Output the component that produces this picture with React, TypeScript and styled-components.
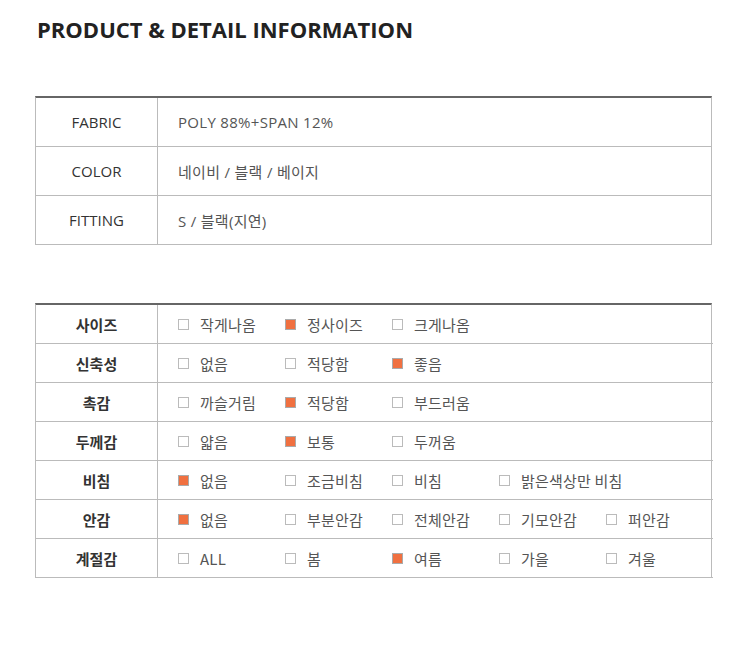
import React from "react";
import styled, { createGlobalStyle } from "styled-components";

const Global = createGlobalStyle`
  html, body { margin: 0; padding: 0; background: #fff; }
  body { font-family: "Open Sans", "Noto Sans CJK KR", sans-serif; }
`;

const Page = styled.div`
  width: 750px;
  padding: 14px 38px 0 35px;
  box-sizing: border-box;
`;

const Title = styled.h1`
  margin: 0 0 0 2px;
  font-family: "Open Sans", sans-serif;
  font-weight: 700;
  font-size: 22px;
  line-height: 30px;
  color: #222;
  letter-spacing: 0;
`;

const Table = styled.div<{ $top: number; $rowH: number }>`
  margin-top: ${(p) => p.$top}px;
  display: grid;
  grid-template-columns: 122px 1fr;
  grid-auto-rows: ${(p) => p.$rowH}px;
  border-top: 2px solid #666;
  border-left: 1px solid #bbb;
  border-right: 1px solid #bbb;
`;

const Label = styled.div<{ $bold?: boolean }>`
  display: flex;
  align-items: center;
  justify-content: center;
  border-right: 1px solid #bbb;
  border-bottom: 1px solid #bbb;
  font-family: "Open Sans", "Noto Sans CJK KR", sans-serif;
  font-size: 15px;
  font-weight: ${(p) => (p.$bold ? 700 : 400)};
  color: #333;
`;

const Value = styled.div`
  display: flex;
  align-items: center;
  padding-left: 20px;
  border-bottom: 1px solid #bbb;
  font-family: "Open Sans", "Noto Sans CJK KR", sans-serif;
  font-size: 15px;
  letter-spacing: 0.3px;
  color: #555;
`;

const Option = styled.div`
  width: 107px;
  display: flex;
  align-items: center;
  gap: 11px;
  font-family: "Noto Sans CJK KR", sans-serif;
  font-size: 15px;
  letter-spacing: 0.2px;
  color: #555;
  white-space: nowrap;
`;

const Box = styled.span<{ $on?: boolean }>`
  width: 11px;
  height: 11px;
  box-sizing: border-box;
  border: 1px solid ${(p) => (p.$on ? "#aaa" : "#bbb")};
  background: ${(p) => (p.$on ? "#f07040" : "#fff")};
  flex: none;
`;

const info: [string, string][] = [
  ["FABRIC", "POLY 88%+SPAN 12%"],
  ["COLOR", "네이비 / 블랙 / 베이지"],
  ["FITTING", "S / 블랙(지연)"],
];

const details: [string, string[], number][] = [
  ["사이즈", ["작게나옴", "정사이즈", "크게나옴"], 1],
  ["신축성", ["없음", "적당함", "좋음"], 2],
  ["촉감", ["까슬거림", "적당함", "부드러움"], 1],
  ["두께감", ["얇음", "보통", "두꺼움"], 1],
  ["비침", ["없음", "조금비침", "비침", "밝은색상만 비침"], 0],
  ["안감", ["없음", "부분안감", "전체안감", "기모안감", "퍼안감"], 0],
  ["계절감", ["ALL", "봄", "여름", "가을", "겨울"], 2],
];

export default function App() {
  return (
    <Page>
      <Global />
      <Title>PRODUCT &amp; DETAIL INFORMATION</Title>
      <Table $top={52} $rowH={49}>
        {info.map(([k, v]) => (
          <React.Fragment key={k}>
            <Label>{k}</Label>
            <Value>{v}</Value>
          </React.Fragment>
        ))}
      </Table>
      <Table $top={58} $rowH={39}>
        {details.map(([k, opts, sel]) => (
          <React.Fragment key={k}>
            <Label $bold>{k}</Label>
            <Value>
              {opts.map((o, i) => (
                <Option key={o}>
                  <Box $on={i === sel} />
                  {o}
                </Option>
              ))}
            </Value>
          </React.Fragment>
        ))}
      </Table>
    </Page>
  );
}
